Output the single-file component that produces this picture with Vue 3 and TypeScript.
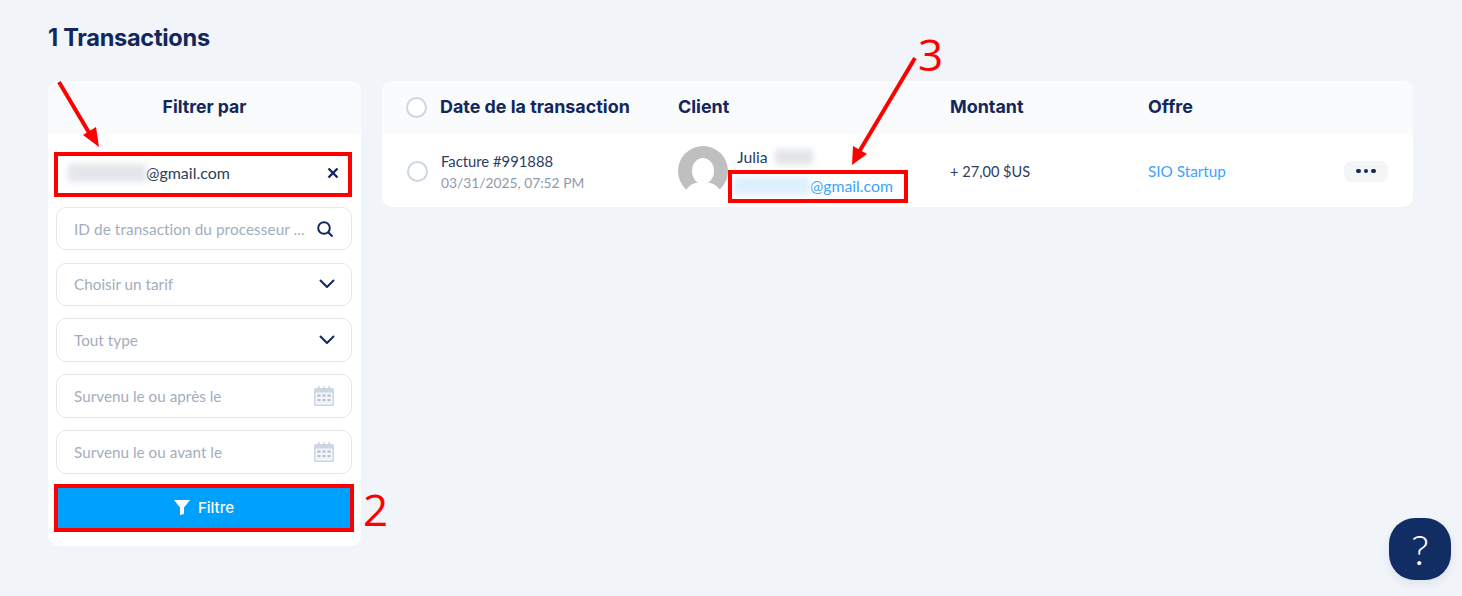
<template>
  <div class="page">
    <h1 class="title">1 Transactions</h1>

    <div class="layout">
      <aside class="filters">
        <div class="filters-head">Filtrer par</div>
        <div class="filters-body">
          <div class="field field-email">
            <span class="value"><span class="blur-mail"></span>@gmail.com</span>
            <svg class="ico" width="14" height="14" viewBox="0 0 14 14">
              <path d="M2.5 2.5l9 9M11.5 2.5l-9 9" stroke="#12285c" stroke-width="2.4" fill="none" />
            </svg>
          </div>
          <div class="field">
            <span class="placeholder id-holder">ID de transaction du processeur ...</span>
            <svg class="ico" width="18" height="18" viewBox="0 0 18 18">
              <circle cx="8" cy="8" r="5.8" stroke="#12285c" stroke-width="2" fill="none" />
              <path d="M12.5 12.5l3.5 3.5" stroke="#12285c" stroke-width="2" stroke-linecap="round" />
            </svg>
          </div>
          <div v-for="label in selects" :key="label" class="field">
            <span class="placeholder">{{ label }}</span>
            <svg class="ico chevron" width="16" height="10" viewBox="0 0 16 10">
              <path d="M1.5 1.5L8 8l6.500-6.500" stroke="#12285c" stroke-width="2" fill="none" stroke-linecap="round" stroke-linejoin="round" />
            </svg>
          </div>
          <div v-for="label in dates" :key="label" class="field">
            <span class="placeholder">{{ label }}</span>
            <svg class="ico calendar" width="22" height="22" viewBox="0 0 22 22">
              <path d="M3 3h16a2 2 0 0 1 2 2v14a2 2 0 0 1-2 2H3a2 2 0 0 1-2-2V5a2 2 0 0 1 2-2z" fill="#ccd6e3" />
              <rect x="5" y="1" width="1.6" height="4" rx=".8" fill="#ccd6e3" />
              <rect x="10.200" y="1" width="1.6" height="4" rx=".8" fill="#ccd6e3" />
              <rect x="15.400" y="1" width="1.6" height="4" rx=".8" fill="#ccd6e3" />
              <rect x="2.500" y="7.500" width="17" height="12" rx="1" fill="#f2f5f9" />
              <g fill="#b4c0d0">
                <rect x="4.500" y="9.500" width="3" height="2.200" />
                <rect x="9.500" y="9.500" width="3" height="2.200" />
                <rect x="14.500" y="9.500" width="3" height="2.200" />
                <rect x="4.500" y="14" width="3" height="2.200" />
                <rect x="9.500" y="14" width="3" height="2.200" />
                <rect x="14.500" y="14" width="3" height="2.200" />
              </g>
            </svg>
          </div>
          <button class="submit" type="button">
            <svg width="16" height="16" viewBox="0 0 16 16">
              <path d="M0 1h16L10 8.500V15l-4 1V8.500z" fill="#fff" />
            </svg>
            Filtre
          </button>
        </div>
      </aside>

      <section class="table">
        <div class="row row-head">
          <span class="radio"></span>
          <span>Date de la transaction</span>
          <span>Client</span>
          <span>Montant</span>
          <span>Offre</span>
          <span></span>
        </div>
        <div class="row row-body">
          <span class="radio"></span>
          <div class="invoice">
            <div>Facture #991888</div>
            <div class="muted">03/31/2025, 07:52 PM</div>
          </div>
          <div class="client">
            <svg class="avatar" width="50" height="50" viewBox="0 0 50 50">
              <circle cx="25" cy="25" r="25" fill="#bfbfbf" />
              <ellipse cx="25" cy="25" rx="11" ry="13" fill="#fff" />
              <path d="M8 44c4-6 10-8 17-8s13 2 17 8a25 25 0 0 1-34 0z" fill="#fff" />
            </svg>
            <div class="client-text">
              <div class="client-name">Julia<span class="blur-name"></span></div>
              <div class="link client-mail"><span class="blur-link"></span>@gmail.com</div>
            </div>
          </div>
          <div class="amount">+ 27,00 $US</div>
          <div class="link">SIO Startup</div>
          <div class="more"><i></i><i></i><i></i></div>
        </div>
      </section>
    </div>

    <button class="help" type="button">?</button>

    <!-- annotations drawn over the screenshot -->
    <div class="mark mark-email"></div>
    <div class="mark mark-button"></div>
    <div class="mark mark-client"></div>
    <span class="num num-2">2</span>
    <span class="num num-3">3</span>
    <svg class="arrows" width="1462" height="596" viewBox="0 0 1462 596">
      <path d="M59 82L91 136" stroke="#f00" stroke-width="4" fill="none" />
      <path d="M99 147L83 135L96 127z" fill="#f00" />
      <path d="M915 58L859 152" stroke="#f00" stroke-width="4" fill="none" />
      <path d="M852 165L853 146L867 154z" fill="#f00" />
    </svg>
  </div>
</template>

<script setup lang="ts">
const selects: string[] = ['Choisir un tarif', 'Tout type']
const dates: string[] = ['Survenu le ou après le', 'Survenu le ou avant le']
</script>

<style>
html,
body {
  background: #f1f4f9;
}
</style>

<style scoped>
.page {
  position: relative;
  height: 596px;
  box-sizing: border-box;
  padding: 0 49px 0 48px;
  overflow: hidden;
  background: #f1f4f9;
  font-family: Lato, "Open Sans", sans-serif;
  font-size: 15.3px;
  color: #2d3c5f;
}

.title {
  margin: 0;
  height: 81px;
  padding-top: 22px;
  box-sizing: border-box;
  font-family: Inter, sans-serif;
  font-size: 23.600px;
  line-height: 32px;
  font-weight: 700;
  letter-spacing: -0.3px;
  color: #12285c;
}

.layout {
  display: flex;
  align-items: flex-start;
  gap: 21px;
}

.filters {
  flex: 0 0 313px;
  height: 465px;
  border-radius: 10px;
  overflow: hidden;
  background: #fff;
}

.filters-head {
  height: 54px;
  background: #f9fbfd;
  text-align: center;
  line-height: 52px;
  font-family: Inter, sans-serif;
  font-size: 17.600px;
  font-weight: 700;
  color: #12285c;
}

.filters-body {
  display: flex;
  flex-direction: column;
  gap: 12.200px;
  padding: 16px 9px 0 8px;
}

.field {
  display: flex;
  align-items: center;
  justify-content: space-between;
  box-sizing: border-box;
  height: 43.600px;
  padding: 0 17px;
  border: 1px solid #e4e8ee;
  border-radius: 10px;
  background: #fff;
}

.field-email {
  border-color: transparent;
  padding: 0 11px;
  color: #2d3c5f;
}

.placeholder {
  white-space: nowrap;
  color: #a3adbd;
}

.id-holder {
  letter-spacing: 0.08px;
}

.ico {
  flex-shrink: 0;
}

.chevron {
  margin-right: -1px;
}

.calendar {
  margin-right: -1px;
}

.value {
  display: flex;
  align-items: center;
  font-size: 16px;
}

.blur-mail,
.blur-link,
.blur-name {
  display: inline-block;
  filter: blur(3px);
}

.blur-mail {
  width: 78px;
  height: 18px;
  background: #e3e6eb;
}

.submit {
  display: flex;
  align-items: center;
  justify-content: center;
  gap: 8px;
  height: 42px;
  margin-top: 1px;
  padding: 0 0 1px;
  border: 0;
  border-radius: 2px;
  background: #00a0ff;
  color: #fff;
  font-family: Inter, sans-serif;
  font-size: 15px;
  font-weight: 500;
}

.table {
  flex: 1;
  border-radius: 10px;
  overflow: hidden;
  background: #fff;
}

.row {
  display: grid;
  grid-template-columns: 33px 238px 272px 198px 1fr 44px;
  align-items: center;
  padding: 0 25px;
}

.row-head {
  box-sizing: border-box;
  height: 54px;
  padding-bottom: 3px;
  background: #f9fbfd;
  font-family: Inter, sans-serif;
  font-size: 17.900px;
  font-weight: 700;
  color: #12285c;
}

.row-head .radio {
  margin: 1px 0 0 -1px;
}

.row-body {
  height: 72px;
}

.radio {
  display: block;
  box-sizing: border-box;
  width: 21px;
  height: 21px;
  border: 2px solid #cdd6e3;
  border-radius: 50%;
  background: #fff;
}

.invoice {
  line-height: 21px;
  padding: 2px 0 0 1px;
  font-size: 14.800px;
}

.muted {
  font-size: 13.800px;
  color: #8e9ab0;
}

.client {
  display: flex;
  align-items: center;
  gap: 9px;
}

.avatar {
  flex-shrink: 0;
  margin-top: -1px;
}

.client-text {
  display: flex;
  flex-direction: column;
  gap: 8px;
  line-height: 21px;
  font-size: 15.800px;
}

.client-name {
  display: flex;
  align-items: center;
}

.blur-name {
  width: 38px;
  height: 16px;
  margin-left: 7px;
  background: #e3e5e9;
}

.client-mail {
  display: flex;
  align-items: center;
  margin-left: -4px;
}

.blur-link {
  width: 77px;
  height: 18px;
  background: #dcf0fe;
}

.amount {
  font-size: 14.600px;
}

.link {
  color: #3ba3ff;
}

.more {
  display: flex;
  align-items: center;
  justify-content: center;
  gap: 3px;
  height: 21px;
  border-radius: 8px;
  background: #f4f5f7;
}

.more i {
  width: 4.500px;
  height: 4.500px;
  border-radius: 50%;
  background: #12285c;
}

.help {
  position: absolute;
  left: 1389px;
  top: 518px;
  width: 62px;
  height: 62px;
  padding: 0;
  border: 0;
  border-radius: 26px;
  background: #122d63;
  color: #fff;
  font-family: Lato, sans-serif;
  font-size: 42px;
  font-weight: 300;
  line-height: 62px;
  box-shadow: 0 4px 10px rgba(18, 45, 99, 0.08);
}

.mark {
  position: absolute;
  box-sizing: border-box;
  border: 4px solid #f00;
  pointer-events: none;
}

.mark-email {
  left: 54px;
  top: 152px;
  width: 298px;
  height: 45px;
}

.mark-button {
  left: 54px;
  top: 484px;
  width: 300px;
  height: 48px;
}

.mark-client {
  left: 728px;
  top: 170px;
  width: 180px;
  height: 33px;
}

.num {
  position: absolute;
  font-family: "Open Sans", sans-serif;
  font-size: 44px;
  line-height: 60px;
  color: #f00;
}

.num-2 {
  left: 363px;
  top: 479px;
}

.num-3 {
  left: 918px;
  top: 24px;
}

.arrows {
  position: absolute;
  left: 0;
  top: 0;
  pointer-events: none;
}
</style>
